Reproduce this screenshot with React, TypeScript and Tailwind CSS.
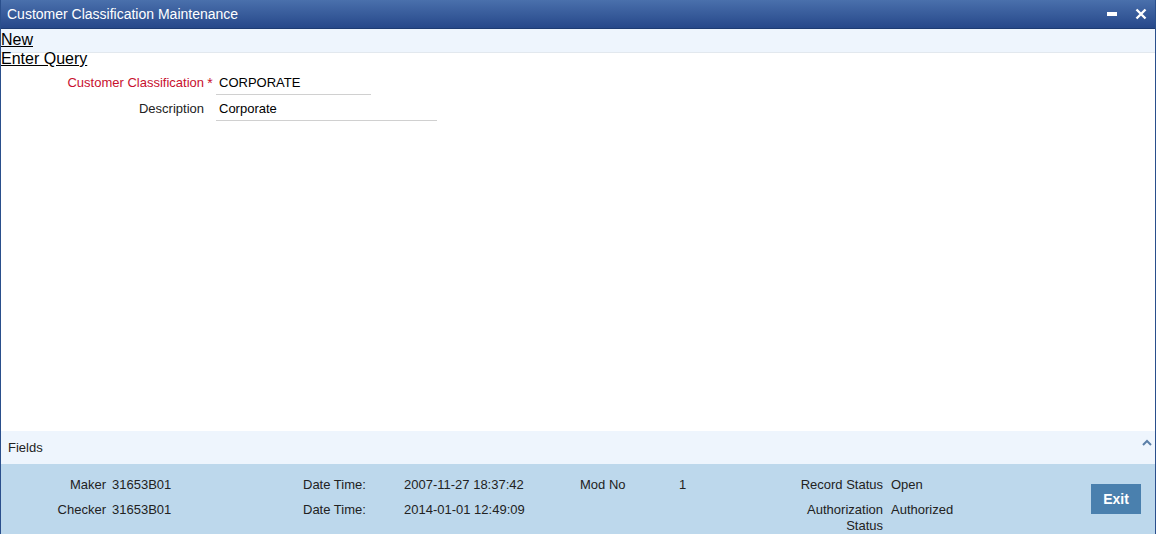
import React from "react";

export default function App() {
  const font = { fontFamily: '"Liberation Sans", Arial, sans-serif' };
  return (
    <div className="w-[1156px] h-[541px] bg-white flex flex-col text-[13px] text-[#222]" style={font}>
      <div className="flex-1 flex flex-col border-x border-[#2a4f8c] min-h-0">
        {/* title bar */}
        <div className="h-[29px] shrink-0 flex items-center justify-between pl-[6px] pr-[8px] bg-gradient-to-b from-[#4a70ac] to-[#27488a] border-b border-[#1e3c73]">
          <span className="text-white text-[14px]">Customer Classification Maintenance</span>
          <div className="flex items-center gap-[18px]">
            <svg width="10" height="4" viewBox="0 0 10 4"><rect width="10" height="4" fill="#fff" /></svg>
            <svg width="12" height="12" viewBox="0 0 12 12"><path d="M1.5 1.5 L10.5 10.5 M10.5 1.5 L1.5 10.5" stroke="#fff" strokeWidth="2.4" /></svg>
          </div>
        </div>
        <div className="h-[24px] shrink-0 bg-[#eef5fd] border-b border-[#e2e8ee] flex items-start pt-[2px]">
          <span className="text-[16px] underline leading-[18px] text-black">New</span>
        </div>
        <div className="text-[16px] underline leading-[16px] text-black -mt-[2px] relative">Enter Query</div>
        <div className="flex flex-col gap-[2px] mt-[4px]">
          <div className="flex items-center h-[24px]">
            <div className="w-[203px] text-right text-[#c8102e] whitespace-nowrap">Customer Classification</div>
            <div className="w-[12px] text-center text-[#c8102e] text-[14px]">*</div>
            <div className="w-[155px] h-[24px] border-b border-[#d0d0d0] pl-[3px] flex items-center text-black">CORPORATE</div>
          </div>
          <div className="flex items-center h-[24px]">
            <div className="w-[203px] text-right">Description</div>
            <div className="w-[12px]" />
            <div className="w-[221px] h-[24px] border-b border-[#d0d0d0] pl-[3px] flex items-center text-black">Corporate</div>
          </div>
        </div>
        <div className="flex-1" />
        <div className="h-[33px] shrink-0 bg-[#eef5fd] flex items-center justify-between pl-[7px] pr-[3px]">
          <span>Fields</span>
          <svg width="10" height="7" viewBox="0 0 10 7" className="-mt-[10px]"><path d="M1 6 L5 2 L9 6" stroke="#5b7fa8" strokeWidth="2" fill="none" /></svg>
        </div>
        <div className="h-[70px] shrink-0 bg-[#bdd8ec] flex pt-[13px] relative">
          <div className="grid grid-cols-[105px_6px_150px_41px_61px_40px_176px_99px_98px_106px_8px_80px] grid-rows-[25px_25px] leading-[16px] whitespace-nowrap">
            <div className="text-right">Maker</div><div /><div>31653B01</div><div /><div>Date Time:</div><div /><div>2007-11-27 18:37:42</div><div>Mod No</div><div>1</div><div className="text-right">Record Status</div><div /><div>Open</div>
            <div className="text-right">Checker</div><div /><div>31653B01</div><div /><div>Date Time:</div><div /><div>2014-01-01 12:49:09</div><div /><div /><div className="text-right">Authorization<br />Status</div><div /><div>Authorized</div>
          </div>
          <div className="ml-auto mr-[14px] mt-[7px]">
            <button className="w-[50px] h-[30px] bg-[#4a80ae] text-white text-[14px] font-bold">Exit</button>
          </div>
        </div>
      </div>
      <div className="h-[7px] shrink-0 bg-white" />
    </div>
  );
}
